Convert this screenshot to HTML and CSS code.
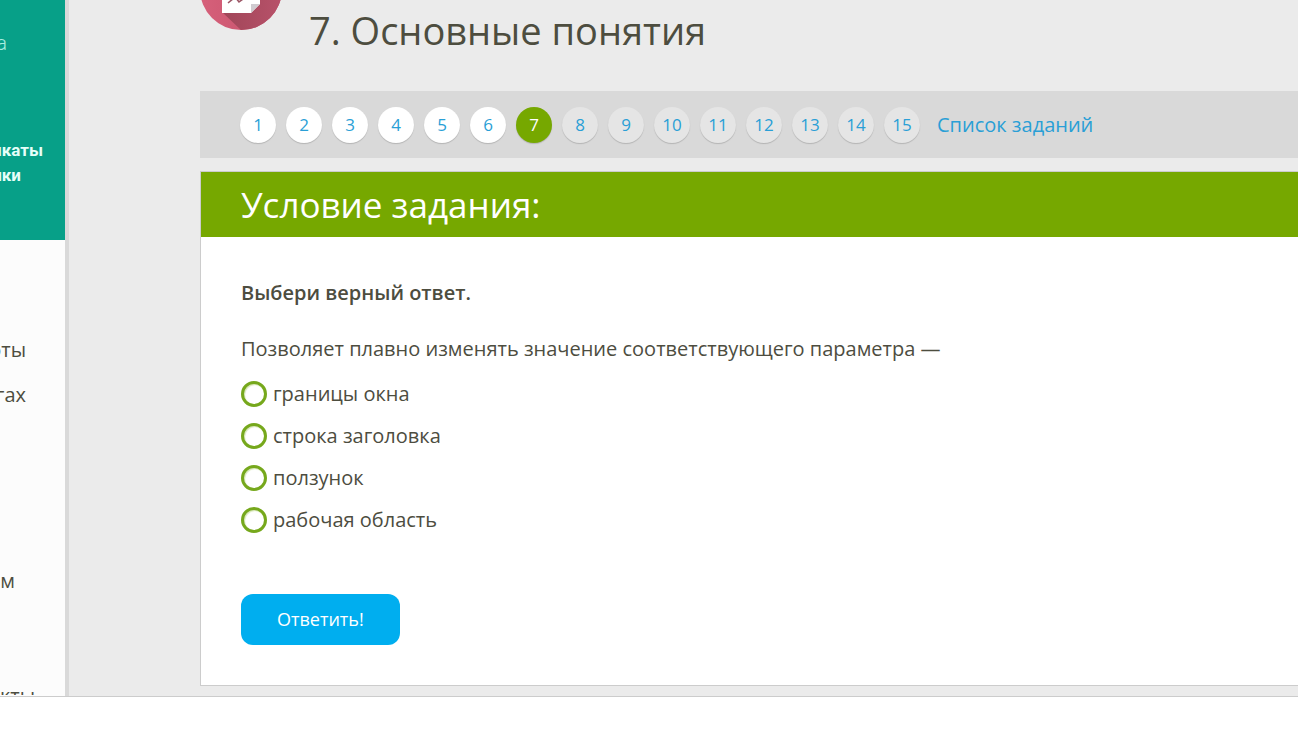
FILE: index.html
```html
<!DOCTYPE html>
<html lang="ru">
<head>
<meta charset="utf-8">
<title>Основные понятия</title>
<link rel="stylesheet" href="styles.css">
</head>
<body>
<div class="workspace">
  <aside class="sidebar">
    <div class="promo">
      <span class="promo-light">а</span>
      <span class="promo-bold promo-first">икаты</span>
      <span class="promo-bold promo-second">ики</span>
    </div>
    <nav class="menu">
      <a class="menu-item" href="#">оты</a>
      <a class="menu-item" href="#">гах</a>
      <a class="menu-item menu-item-short" href="#">м</a>
      <a class="menu-item menu-item-last" href="#">кты</a>
    </nav>
  </aside>
  <main class="content">
    <header class="page-header">
      <svg class="subject-icon" viewBox="0 0 82 30" aria-hidden="true">
        <defs>
          <linearGradient id="disc" x1="0" y1="0" x2="1" y2="0">
            <stop offset="0" stop-color="#d6607a"/>
            <stop offset="1" stop-color="#c4506a"/>
          </linearGradient>
          <linearGradient id="shade" x1="0" y1="0" x2="1" y2="0">
            <stop offset="0" stop-color="#a04558"/>
            <stop offset="1" stop-color="#b8526a"/>
          </linearGradient>
          <clipPath id="round"><circle cx="41" cy="-11" r="41"/></clipPath>
        </defs>
        <circle cx="41" cy="-11" r="41" fill="url(#disc)"/>
        <path d="M22 12L42 31H82V-10L60 0Z" fill="url(#shade)" clip-path="url(#round)"/>
        <path d="M22 0H60V4L51 13H22Z" fill="#fff"/>
        <path d="M60 4H51V13Z" fill="#cfcbd0"/>
        <path d="M28 3L34 -2M36 -2L39 2L43 -1" fill="none" stroke="#9c5565" stroke-width="1.6"/>
      </svg>
      <h1 class="page-title">7. Основные понятия</h1>
    </header>
    <nav class="pager">
      <a class="step" href="#">1</a>
      <a class="step" href="#">2</a>
      <a class="step" href="#">3</a>
      <a class="step" href="#">4</a>
      <a class="step" href="#">5</a>
      <a class="step" href="#">6</a>
      <a class="step step-current" href="#" aria-current="page">7</a>
      <a class="step step-next" href="#">8</a>
      <a class="step step-next" href="#">9</a>
      <a class="step step-next" href="#">10</a>
      <a class="step step-next" href="#">11</a>
      <a class="step step-next" href="#">12</a>
      <a class="step step-next" href="#">13</a>
      <a class="step step-next" href="#">14</a>
      <a class="step step-next" href="#">15</a>
      <a class="all-tasks" href="#">Список заданий</a>
    </nav>
    <section class="task">
      <h2 class="task-title">Условие задания:</h2>
      <form class="task-body">
        <p class="instruction">Выбери верный ответ.</p>
        <p class="question">Позволяет плавно изменять значение соответствующего параметра —</p>
        <div class="options">
          <label class="option"><input class="radio" type="radio" name="answer">границы окна</label>
          <label class="option"><input class="radio" type="radio" name="answer">строка заголовка</label>
          <label class="option"><input class="radio" type="radio" name="answer">ползунок</label>
          <label class="option"><input class="radio" type="radio" name="answer">рабочая область</label>
        </div>
        <button class="submit" type="button">Ответить!</button>
      </form>
    </section>
  </main>
</div>
<footer class="footer"></footer>
</body>
</html>
```
FILE: styles.css
```css
* { box-sizing: border-box; }
body {
  margin: 0;
  min-height: 100vh;
  display: flex;
  flex-direction: column;
  background: #fff;
  color: #4d4d3f;
  font-family: "Open Sans", "Noto Sans", sans-serif;
  font-size: 20px;
  line-height: 28px;
}
a { text-decoration: none; }
h1, h2, p { margin: 0; font-weight: 400; }
.workspace { display: flex; background: #ebebeb; }
.sidebar {
  flex: none;
  width: 69px;
  overflow: hidden;
  border-right: 4px solid #d9d9d9;
  background: #fcfcfc;
}
.promo {
  display: flex;
  flex-direction: column;
  align-items: flex-end;
  height: 240px;
  padding-top: 31px;
  background: #07a088;
  color: #e6fff9;
  font-family: Roboto, sans-serif;
  font-size: 17px;
  line-height: 25px;
}
.promo-light { padding-right: 58px; color: #a9eee0; font-weight: 300; font-size: 20px; }
.promo-bold { font-weight: 700; }
.promo-first { margin-top: 82px; padding-right: 22px; }
.promo-second { padding-right: 44px; }
.menu { display: flex; flex-direction: column; align-items: flex-end; padding-top: 96px; }
.menu-item { height: 45px; padding-right: 39px; color: #4d4d3f; }
.menu-item-short { margin-top: 141px; padding-right: 50px; }
.menu-item-last { height: 13px; margin-top: 70px; padding-right: 30px; overflow: hidden; }
.content { flex: 1; min-width: 0; padding: 0 0 10px 131px; }
.page-header { display: flex; gap: 27px; height: 91px; }
.subject-icon { flex: none; width: 82px; height: 30px; }
.page-title { font-size: 38px; line-height: 60px; white-space: nowrap; }
.pager {
  display: flex;
  align-items: center;
  gap: 10px;
  height: 67px;
  padding-left: 40px;
  background: #d9d9d9;
}
.step {
  display: grid;
  place-items: center;
  width: 36px;
  height: 36px;
  border-radius: 50%;
  background: #fff;
  box-shadow: 0 1px 1px #b4b4b4;
  color: #2a9fd6;
  font-size: 17px;
}
.step-next { background: #e5e5e5; }
.step-current { background: #76a800; color: #fff; }
.all-tasks { margin-left: 7px; color: #2a9fd6; white-space: nowrap; }
.task {
  margin-top: 13px;
  border: 1px solid #ccc;
  border-right: 0;
  background: #fff;
}
.task-title {
  padding: 0 40px;
  background: #76a800;
  color: #fff;
  font-size: 35px;
  line-height: 65px;
}
.task-body { padding: 42px 40px 40px; }
.instruction { font-weight: 600; }
.question { margin-top: 28px; }
.options { display: grid; gap: 14px; margin-top: 17px; }
.option { display: flex; align-items: center; gap: 6px; }
.radio {
  appearance: none;
  width: 26px;
  height: 26px;
  margin: 0;
  border: 3px solid #76a81c;
  border-radius: 50%;
  background: #fff;
  box-shadow: inset 1px 1px 1px #d5e6b5;
}
.submit {
  display: block;
  height: 51px;
  margin-top: 60px;
  padding: 0 36px 2px;
  border: 0;
  border-radius: 12px;
  background: #00aeef;
  color: #fff;
  font: 18px "Open Sans", "Noto Sans", sans-serif;
}
.footer { flex: 1; border-top: 1px solid #ccc; background: #fff; }
```
